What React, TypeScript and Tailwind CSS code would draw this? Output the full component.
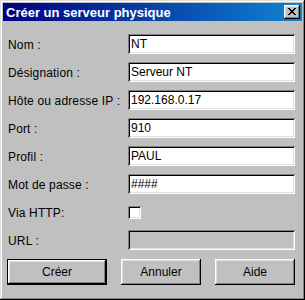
import React from "react";

const font = { fontFamily: '"Liberation Sans", Arial, sans-serif' };

function Field({ value, disabled }: { value?: string; disabled?: boolean }) {
  return (
    <div
      className={`h-[20px] w-[167px] flex items-center pl-[3px] text-[12px] text-black ${
        disabled ? "bg-[#c0c0c0]" : "bg-white"
      } shadow-[inset_1px_1px_#808080,inset_-1px_-1px_#ffffff,inset_2px_2px_#000000,inset_-2px_-2px_#dfdfdf]`}
    >
      {value}
    </div>
  );
}

function Row({ label, children }: { label: string; children: React.ReactNode }) {
  return (
    <div className="flex h-[20px] items-center">
      <div className="w-[120px] text-[12px] tracking-[0.15px] text-black pt-[1px]">{label}</div>
      {children}
    </div>
  );
}

function Btn({ label, def, w }: { label: string; def?: boolean; w: string }) {
  const inner = (
    <div className="flex h-full w-full items-center justify-center bg-[#c0c0c0] text-[12px] text-black shadow-[inset_-1px_-1px_#000000,inset_1px_1px_#ffffff,inset_-2px_-2px_#808080,inset_2px_2px_#dfdfdf]">
      {label}
    </div>
  );
  return def ? (
    <div className={`${w} h-[26px] border border-black`}>{inner}</div>
  ) : (
    <div className={`${w} h-[26px]`}>{inner}</div>
  );
}

export default function App() {
  return (
    <div
      className="w-[305px] h-[300px] bg-[#c0c0c0] p-[3px] flex flex-col shadow-[inset_-1px_-1px_#000000,inset_1px_1px_#dfdfdf,inset_-2px_-2px_#808080,inset_2px_2px_#ffffff]"
      style={font}
    >
      <div className="h-[18px] flex items-center justify-between pl-[3px] pr-[2px] bg-[linear-gradient(to_right,#000080,#1084d0)]">
        <span className="text-white font-bold text-[13px] leading-none">Créer un serveur physique</span>
        <div className="w-[16px] h-[14px] bg-[#c0c0c0] flex items-center justify-center shadow-[inset_-1px_-1px_#000000,inset_1px_1px_#ffffff,inset_-2px_-2px_#808080,inset_2px_2px_#dfdfdf]">
          <svg width="8" height="7" viewBox="0 0 8 7" className="mb-[1px]">
            <path d="M0 0h2v1h1v1h2V1h1V0h2v1H7v1H6v1H5v1h1v1h1v1h1v1H6V6H5V5H3v1H2v1H0V6h1V5h1V4h1V3H2V2H1V1H0z" fill="#000" />
          </svg>
        </div>
      </div>
      <div className="flex flex-col gap-[8px] pl-[5px] pt-[13px]">
        <Row label="Nom :"><Field value="NT" /></Row>
        <Row label="Désignation :"><Field value="Serveur NT" /></Row>
        <Row label="Hôte ou adresse IP :"><Field value="192.168.0.17" /></Row>
        <Row label="Port :"><Field value="910" /></Row>
        <Row label="Profil :"><Field value="PAUL" /></Row>
        <Row label="Mot de passe :"><Field value="####" /></Row>
        <Row label="Via HTTP:">
          <div className="w-[13px] h-[13px] bg-white shadow-[inset_1px_1px_#808080,inset_-1px_-1px_#ffffff,inset_2px_2px_#000000,inset_-2px_-2px_#dfdfdf]" />
        </Row>
        <Row label="URL :"><Field disabled /></Row>
      </div>
      <div className="flex gap-[14px] pl-[4px] pt-[9px]">
        <Btn label="Créer" def w="w-[100px]" />
        <Btn label="Annuler" w="w-[80px]" />
        <Btn label="Aide" w="w-[80px]" />
      </div>
    </div>
  );
}
